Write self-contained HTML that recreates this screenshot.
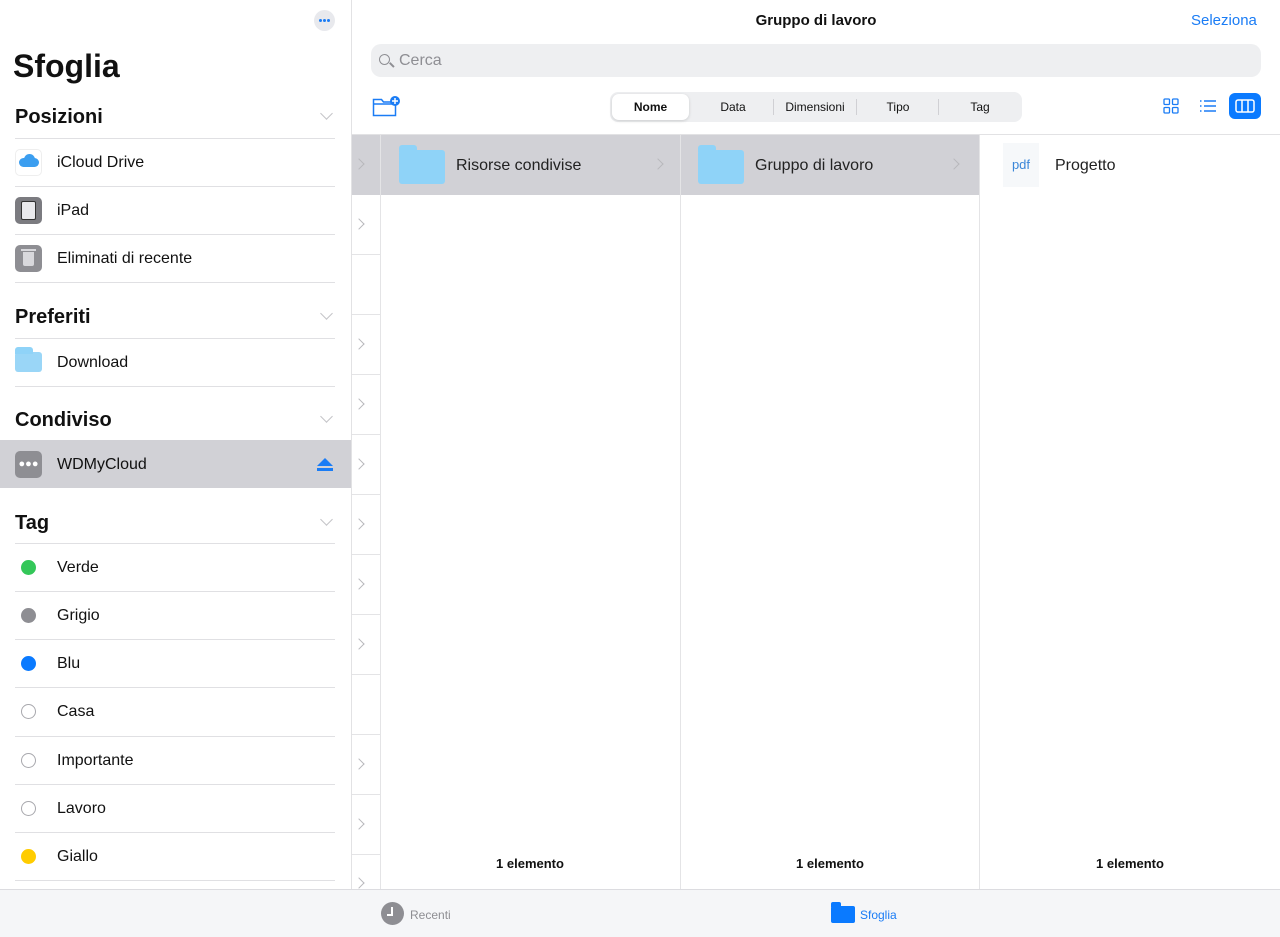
<!DOCTYPE html>
<html><head><meta charset="utf-8"><style>
*{box-sizing:border-box;margin:0;padding:0}
body{width:1280px;height:937px;overflow:hidden;background:#fff;font-family:"Liberation Sans",sans-serif;color:#111;position:relative}
.abs{position:absolute}
.side{left:0;top:0;width:352px;height:889px;border-right:1px solid #e2e2e4}
.hdr{position:absolute;left:15px;font-weight:bold;font-size:20px}
.chev{position:absolute;left:322px;width:9px;height:9px;border-right:1.5px solid #c4c4c8;border-bottom:1.5px solid #c4c4c8;transform:rotate(45deg)}
.sep{position:absolute;left:15px;right:16px;height:1px;background:#e0e0e3}
.row{position:absolute;left:0;width:351px;height:48px;font-size:16px}
.row span{position:absolute;left:57px;top:16px}
.ic{position:absolute;left:15px;top:11px;width:27px;height:27px;border-radius:5px}
.dot{position:absolute;left:21px;top:17px;width:15px;height:15px;border-radius:50%}
.cc{position:absolute;width:8px;height:8px;border-right:1.5px solid #b8b8bc;border-top:1.5px solid #b8b8bc;transform:rotate(45deg)}
.seg{position:absolute;top:94px;height:26px;font-size:12px;text-align:center;line-height:26px;color:#111}
.folder{position:absolute;width:46px;height:34px;background:#8fd3f8;border-radius:3px}
.folder:before{content:"";position:absolute;left:0;top:-5px;width:18px;height:7px;background:#8fd3f8;border-radius:3px 3px 0 0}
</style></head><body>
<div class="abs side">
 <div class="abs" style="left:314px;top:10px;width:21px;height:21px;border-radius:50%;background:#e8e9ed"><div style="position:absolute;left:5px;top:9px;width:3px;height:3px;border-radius:50%;background:#1a7cf5"></div><div style="position:absolute;left:9px;top:9px;width:3px;height:3px;border-radius:50%;background:#1a7cf5"></div><div style="position:absolute;left:13px;top:9px;width:3px;height:3px;border-radius:50%;background:#1a7cf5"></div></div>
 <div class="abs" style="left:13px;top:48px;font-size:32px;font-weight:bold">Sfoglia</div>
 <div class="hdr" style="top:106px">Posizioni</div><div class="chev" style="top:109px"></div>
 <div class="sep" style="top:138px"></div>
 <div class="row" style="top:138px"><div class="ic" style="background:#fff;border:1px solid #eee"><div style="position:absolute;left:3px;top:8px;width:20px;height:9px;background:#3b9ef0;border-radius:6px"></div><div style="position:absolute;left:8px;top:4px;width:11px;height:11px;background:#3b9ef0;border-radius:50%"></div></div><span>iCloud Drive</span></div>
 <div class="sep" style="top:186px"></div>
 <div class="row" style="top:186px"><div class="ic" style="background:#7b7b80"><div style="position:absolute;left:6px;top:4px;width:15px;height:19px;background:#e9e9ec;border:1px solid #333;border-radius:2px"></div></div><span>iPad</span></div>
 <div class="sep" style="top:234px"></div>
 <div class="row" style="top:234px"><div class="ic" style="background:#8e8e93"><div style="position:absolute;left:8px;top:7px;width:11px;height:14px;background:#d8d8dc;border-radius:0 0 2px 2px"></div><div style="position:absolute;left:6px;top:4px;width:15px;height:2px;background:#d8d8dc"></div></div><span>Eliminati di recente</span></div>
 <div class="sep" style="top:282px"></div>
 <div class="hdr" style="top:306px">Preferiti</div><div class="chev" style="top:309px"></div>
 <div class="sep" style="top:338px"></div>
 <div class="row" style="top:338px"><div class="folder" style="left:15px;top:14px;width:27px;height:20px;background:#9ad6f7"></div><span>Download</span></div>
 <div class="sep" style="top:386px"></div>
 <div class="hdr" style="top:409px">Condiviso</div><div class="chev" style="top:412px"></div>
 <div class="row" style="top:440px;background:#d1d1d6"><div class="ic" style="background:#8e8e93;color:#fff;font-size:11px;text-align:center;line-height:27px">●●●</div><span>WDMyCloud</span>
  <div style="position:absolute;left:317px;top:18px;width:0;height:0;border-left:8px solid transparent;border-right:8px solid transparent;border-bottom:8px solid #1a7cf5"></div><div style="position:absolute;left:317px;top:28px;width:16px;height:3px;background:#1a7cf5"></div></div>
 <div class="hdr" style="top:512px">Tag</div><div class="chev" style="top:515px"></div>
 <div class="sep" style="top:543px"></div>
 <div class="row" style="top:543px"><div class="dot" style="background:#34c759"></div><span>Verde</span></div>
 <div class="sep" style="top:591px"></div>
 <div class="row" style="top:591px"><div class="dot" style="background:#8e8e93"></div><span>Grigio</span></div>
 <div class="sep" style="top:639px"></div>
 <div class="row" style="top:639px"><div class="dot" style="background:#0a7aff"></div><span>Blu</span></div>
 <div class="sep" style="top:687px"></div>
 <div class="row" style="top:687px"><div class="dot" style="border:1.5px solid #a8a8ad"></div><span>Casa</span></div>
 <div class="sep" style="top:736px"></div>
 <div class="row" style="top:736px"><div class="dot" style="border:1.5px solid #a8a8ad"></div><span>Importante</span></div>
 <div class="sep" style="top:784px"></div>
 <div class="row" style="top:784px"><div class="dot" style="border:1.5px solid #a8a8ad"></div><span>Lavoro</span></div>
 <div class="sep" style="top:832px"></div>
 <div class="row" style="top:832px"><div class="dot" style="background:#ffcc00"></div><span>Giallo</span></div>
 <div class="sep" style="top:880px"></div>
</div>

<div class="abs" style="left:352px;top:12px;width:928px;text-align:center;font-size:15px;font-weight:bold">Gruppo di lavoro</div>
<div class="abs" style="left:1191px;top:12px;font-size:15px;color:#1a7cf5">Seleziona</div>
<div class="abs" style="left:371px;top:44px;width:890px;height:33px;background:#eeeff1;border-radius:10px;color:#8e8e93;font-size:16px;line-height:33px;padding-left:28px">Cerca
 <div style="position:absolute;left:8px;top:10px;width:11px;height:11px;border:1.5px solid #8e8e93;border-radius:50%"></div><div style="position:absolute;left:18px;top:20px;width:6px;height:1.5px;background:#8e8e93;transform:rotate(45deg)"></div></div>
<svg class="abs" style="left:372px;top:95px" width="30" height="22" viewBox="0 0 30 22"><path d="M1.5 4.5h8l2 2.5h12v13.5h-22z M1.5 9h22" fill="none" stroke="#1a7cf5" stroke-width="1.5"/><circle cx="23" cy="6" r="5" fill="#1a7cf5"/><path d="M23 3v6M20 6h6" stroke="#fff" stroke-width="1.5"/></svg>
<div class="abs" style="left:610px;top:92px;width:412px;height:30px;background:#eeeff1;border-radius:8px"></div>
<div class="abs" style="left:612px;top:94px;width:77px;height:26px;background:#fff;border-radius:7px;box-shadow:0 1px 3px rgba(0,0,0,.15)"></div>
<div class="seg" style="left:612px;width:77px;font-weight:bold">Nome</div>
<div class="seg" style="left:693px;width:80px">Data</div>
<div class="seg" style="left:775px;width:80px">Dimensioni</div>
<div class="seg" style="left:858px;width:80px">Tipo</div>
<div class="seg" style="left:940px;width:80px">Tag</div>
<div class="abs" style="left:773px;top:99px;width:1px;height:16px;background:#d0d0d4"></div>
<div class="abs" style="left:856px;top:99px;width:1px;height:16px;background:#d0d0d4"></div>
<div class="abs" style="left:938px;top:99px;width:1px;height:16px;background:#d0d0d4"></div>
<svg class="abs" style="left:1163px;top:98px" width="16" height="16"><g fill="none" stroke="#1a7cf5" stroke-width="1.3"><rect x="1" y="1" width="5.5" height="5.5" rx="1"/><rect x="9.5" y="1" width="5.5" height="5.5" rx="1"/><rect x="1" y="9.5" width="5.5" height="5.5" rx="1"/><rect x="9.5" y="9.5" width="5.5" height="5.5" rx="1"/></g></svg>
<svg class="abs" style="left:1199px;top:98px" width="18" height="16"><g stroke="#1a7cf5" stroke-width="1.4"><path d="M5 3h12M5 8h12M5 13h12"/><path d="M1 3h1.5M1 8h1.5M1 13h1.5"/></g></svg>
<div class="abs" style="left:1229px;top:93px;width:32px;height:26px;background:#0a7aff;border-radius:6px"><svg width="32" height="26"><rect x="7" y="7" width="18" height="12" rx="2" fill="none" stroke="#fff" stroke-width="1.5"/><path d="M13 7v12M19 7v12" stroke="#fff" stroke-width="1.5"/></svg></div>

<div class="abs" style="left:352px;top:134px;width:928px;height:1px;background:#e2e2e4"></div>
<div class="abs" style="left:352px;top:135px;width:628px;height:60px;background:#d1d1d6"></div>
<div class="abs" style="left:380px;top:135px;width:1px;height:754px;background:#e4e4e6"></div>
<div class="abs" style="left:680px;top:135px;width:1px;height:754px;background:#e4e4e6"></div>
<div class="abs" style="left:979px;top:135px;width:1px;height:754px;background:#e4e4e6"></div>
<div class="abs" style="left:352px;top:254px;width:28px;height:1px;background:#e4e4e6"></div>
<div class="abs" style="left:352px;top:314px;width:28px;height:1px;background:#e4e4e6"></div>
<div class="abs" style="left:352px;top:374px;width:28px;height:1px;background:#e4e4e6"></div>
<div class="abs" style="left:352px;top:434px;width:28px;height:1px;background:#e4e4e6"></div>
<div class="abs" style="left:352px;top:494px;width:28px;height:1px;background:#e4e4e6"></div>
<div class="abs" style="left:352px;top:554px;width:28px;height:1px;background:#e4e4e6"></div>
<div class="abs" style="left:352px;top:614px;width:28px;height:1px;background:#e4e4e6"></div>
<div class="abs" style="left:352px;top:674px;width:28px;height:1px;background:#e4e4e6"></div>
<div class="abs" style="left:352px;top:734px;width:28px;height:1px;background:#e4e4e6"></div>
<div class="abs" style="left:352px;top:794px;width:28px;height:1px;background:#e4e4e6"></div>
<div class="abs" style="left:352px;top:854px;width:28px;height:1px;background:#e4e4e6"></div>
<div class="cc" style="left:355px;top:160px"></div>
<div class="cc" style="left:355px;top:220px"></div>
<div class="cc" style="left:355px;top:340px"></div>
<div class="cc" style="left:355px;top:400px"></div>
<div class="cc" style="left:355px;top:460px"></div>
<div class="cc" style="left:355px;top:520px"></div>
<div class="cc" style="left:355px;top:580px"></div>
<div class="cc" style="left:355px;top:640px"></div>
<div class="cc" style="left:355px;top:760px"></div>
<div class="cc" style="left:355px;top:820px"></div>
<div class="cc" style="left:355px;top:879px"></div>

<div class="folder" style="left:399px;top:150px"></div>
<div class="abs" style="left:456px;top:157px;font-size:16px;color:#222">Risorse condivise</div>
<div class="cc" style="left:654px;top:160px"></div>
<div class="folder" style="left:698px;top:150px"></div>
<div class="abs" style="left:755px;top:157px;font-size:16px;color:#222">Gruppo di lavoro</div>
<div class="cc" style="left:950px;top:160px"></div>
<div class="abs" style="left:1003px;top:143px;width:36px;height:44px;background:#f6f8fa;color:#3a86d8;font-size:13px;text-align:center;line-height:44px">pdf</div>
<div class="abs" style="left:1055px;top:157px;font-size:16px;color:#222">Progetto</div>

<div class="abs" style="left:380px;top:856px;width:300px;text-align:center;font-size:13px;font-weight:bold">1 elemento</div>
<div class="abs" style="left:680px;top:856px;width:300px;text-align:center;font-size:13px;font-weight:bold">1 elemento</div>
<div class="abs" style="left:980px;top:856px;width:300px;text-align:center;font-size:13px;font-weight:bold">1 elemento</div>

<div class="abs" style="left:0;top:889px;width:1280px;height:48px;background:#f5f6f8;border-top:1px solid #dcdce0"></div>
<div class="abs" style="left:381px;top:902px;width:23px;height:23px;border-radius:50%;background:#8e8e93"><div style="position:absolute;left:10px;top:5px;width:2px;height:8px;background:#fff"></div><div style="position:absolute;left:6px;top:12px;width:6px;height:2px;background:#fff"></div></div>
<div class="abs" style="left:410px;top:908px;font-size:12px;color:#8e8e93">Recenti</div>
<div class="abs" style="left:831px;top:906px;width:24px;height:17px;background:#0a7aff;border-radius:2px"></div>
<div class="abs" style="left:831px;top:902px;width:10px;height:5px;background:#0a7aff;border-radius:2px 2px 0 0"></div>
<div class="abs" style="left:860px;top:908px;font-size:12px;color:#1a7cf5">Sfoglia</div>
</body></html>
